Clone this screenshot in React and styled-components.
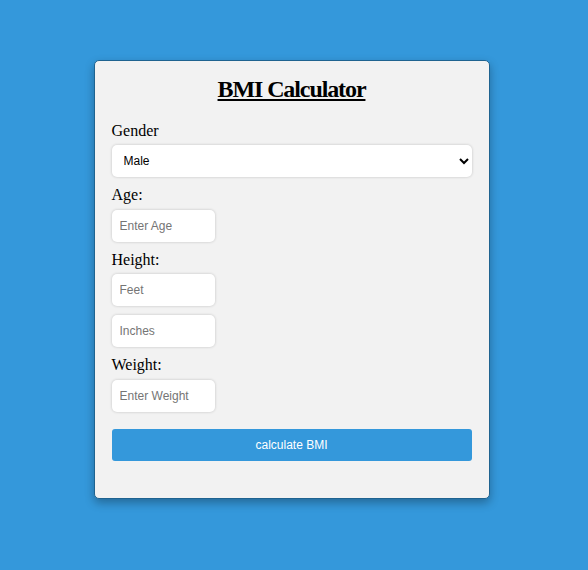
import React from "react";
import styled, { createGlobalStyle } from "styled-components";

const Global = createGlobalStyle`
  html, body { margin: 0; padding: 0; }
  body {
    background: #3498db;
    font-family: "Liberation Serif", "Times New Roman", serif;
    min-height: 570px;
  }
`;

const Page = styled.div`
  display: flex;
  justify-content: center;
  padding: 60px 5px 0 0;
`;

const Card = styled.div`
  width: 396px;
  box-sizing: border-box;
  background: #f2f2f2;
  border-radius: 5px;
  border: 1px solid #1f6390;
  box-shadow: 0 4px 10px rgba(0, 0, 0, 0.3);
  padding: 15px 17px 37px;
  display: flex;
  flex-direction: column;
`;

const Title = styled.h2`
  margin: 0 0 18px;
  font-size: 24px;
  font-weight: bold;
  letter-spacing: -1.1px;
  text-align: center;
  text-decoration: underline;
  color: #000;
`;

const Label = styled.label`
  display: block;
  font-size: 16px;
  line-height: 18.4px;
  color: #000;
  margin-top: 1px;
  margin-bottom: ${(p) => p.$mb || 5}px;
`;

const Select = styled.select`
  width: 100%;
  height: 32px;
  box-sizing: border-box;
  border: none;
  border-radius: 5px;
  background: #fff;
  box-shadow: 0 0 3px rgba(0, 0, 0, 0.2);
  padding: 0 6px 0 8px;
  font-family: "Liberation Sans", Arial, sans-serif;
  font-size: 12px;
  color: #000;
  margin-bottom: 8px;
  outline: none;
`;

const Input = styled.input`
  width: 103px;
  height: 32px;
  box-sizing: border-box;
  border: none;
  border-radius: 5px;
  background: #fff;
  box-shadow: 0 0 3px rgba(0, 0, 0, 0.2);
  padding: 0 8px;
  font-family: "Liberation Sans", Arial, sans-serif;
  font-size: 12px;
  margin-bottom: ${(p) => p.$mb ?? 8}px;
  outline: none;
  &::placeholder { color: #757575; }
`;

const Button = styled.button`
  width: 100%;
  height: 32px;
  border: none;
  border-radius: 3px;
  background: #3498db;
  color: #fff;
  font-family: "Liberation Sans", Arial, sans-serif;
  font-size: 12px;
  cursor: pointer;
  margin-top: 9px;
`;

export default function App() {
  return (
    <>
      <Global />
      <Page>
        <Card>
          <Title>BMI Calculator</Title>
          <Label>Gender</Label>
          <Select defaultValue="male">
            <option value="male">Male</option>
            <option value="female">Female</option>
          </Select>
          <Label>Age:</Label>
          <Input placeholder="Enter Age" />
          <Label>Height:</Label>
          <Input placeholder="Feet" $mb={9} />
          <Input placeholder="Inches" />
          <Label>Weight:</Label>
          <Input placeholder="Enter Weight" />
          <Button>calculate BMI</Button>
        </Card>
      </Page>
    </>
  );
}
